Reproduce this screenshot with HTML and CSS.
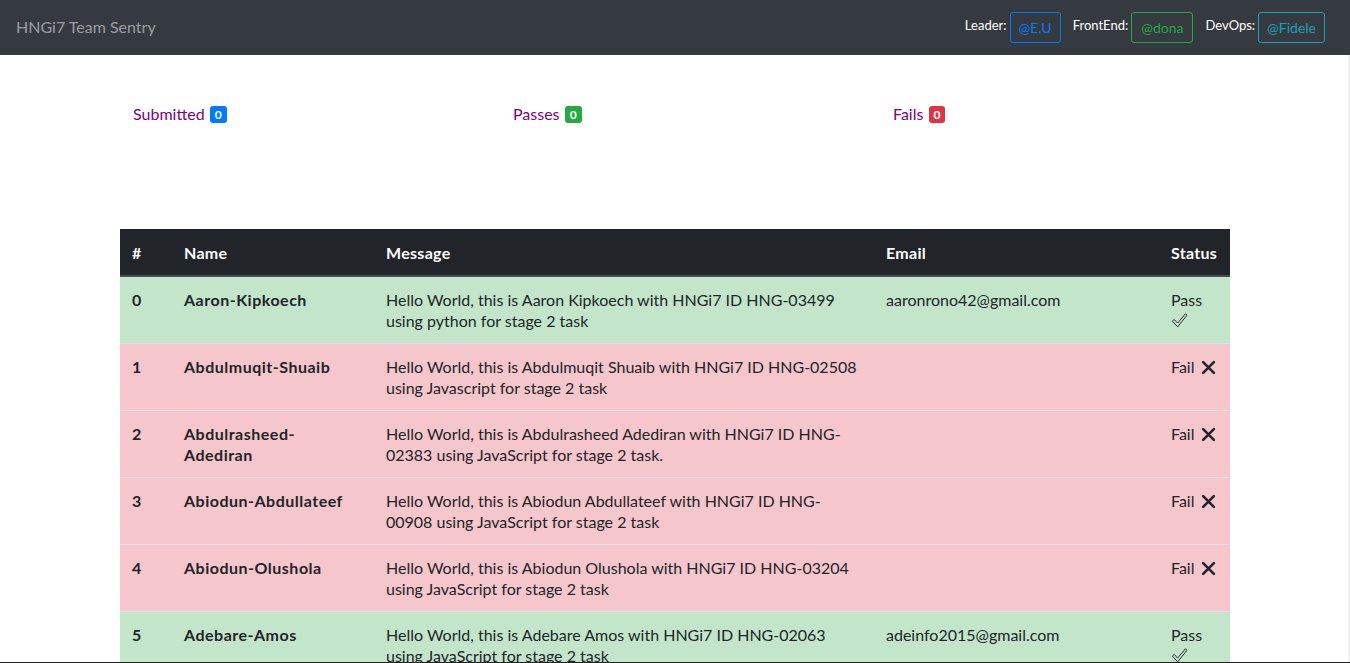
FILE: index.html
```html
<!DOCTYPE html>
<html>
<head>
<meta charset="utf-8">
<link rel="stylesheet" href="styles.css">
</head>
<body>
<nav class="navbar">
  <span class="brand">HNGi7 Team Sentry</span>
  <div class="team">
    <span class="role">Leader:</span><span class="btn btn-blue">@E.U</span>
    <span class="role">FrontEnd:</span><span class="btn btn-green">@dona</span>
    <span class="role">DevOps:</span><span class="btn btn-teal">@Fidele</span>
  </div>
</nav>
<main class="container">
  <div class="stats">
    <div class="stat">Submitted <span class="badge b-blue">0</span></div>
    <div class="stat">Passes <span class="badge b-green">0</span></div>
    <div class="stat">Fails <span class="badge b-red">0</span></div>
  </div>
  <table class="table">
    <thead>
      <tr><th class="c-num">#</th><th class="c-name">Name</th><th class="c-msg">Message</th><th class="c-email">Email</th><th class="c-status">Status</th></tr>
    </thead>
    <tbody>
      <tr class="pass"><td class="bold">0</td><td class="bold">Aaron-Kipkoech</td><td>Hello World, this is Aaron Kipkoech with HNGi7 ID HNG-03499 using python for stage 2 task</td><td>aaronrono42@gmail.com</td><td>Pass <svg class="check" viewBox="0 0 16 16"><path d="M1.2 8.6 L3 7 L6.2 10.4 L13.6 1.6 L15 3 L6.3 14 Z" fill="none" stroke="#212529" stroke-width="0.9" stroke-linejoin="round"/></svg></td></tr>
      <tr class="fail"><td class="bold">1</td><td class="bold">Abdulmuqit-Shuaib</td><td>Hello World, this is Abdulmuqit Shuaib with HNGi7 ID HNG-02508 using Javascript for stage 2 task</td><td></td><td>Fail <svg class="cross" viewBox="0 0 14 14"><path d="M2 2 L12 12 M12 2 L2 12" stroke="#212529" stroke-width="2.4" stroke-linecap="round"/></svg></td></tr>
      <tr class="fail"><td class="bold">2</td><td class="bold">Abdulrasheed-Adediran</td><td>Hello World, this is Abdulrasheed Adediran with HNGi7 ID HNG-02383 using JavaScript for stage 2 task.</td><td></td><td>Fail <svg class="cross" viewBox="0 0 14 14"><path d="M2 2 L12 12 M12 2 L2 12" stroke="#212529" stroke-width="2.4" stroke-linecap="round"/></svg></td></tr>
      <tr class="fail"><td class="bold">3</td><td class="bold">Abiodun-Abdullateef</td><td>Hello World, this is Abiodun Abdullateef with HNGi7 ID HNG-00908 using JavaScript for stage 2 task</td><td></td><td>Fail <svg class="cross" viewBox="0 0 14 14"><path d="M2 2 L12 12 M12 2 L2 12" stroke="#212529" stroke-width="2.4" stroke-linecap="round"/></svg></td></tr>
      <tr class="fail"><td class="bold">4</td><td class="bold">Abiodun-Olushola</td><td>Hello World, this is Abiodun Olushola with HNGi7 ID HNG-03204 using JavaScript for stage 2 task</td><td></td><td>Fail <svg class="cross" viewBox="0 0 14 14"><path d="M2 2 L12 12 M12 2 L2 12" stroke="#212529" stroke-width="2.4" stroke-linecap="round"/></svg></td></tr>
      <tr class="pass"><td class="bold">5</td><td class="bold">Adebare-Amos</td><td>Hello World, this is Adebare Amos with HNGi7 ID HNG-02063 using JavaScript for stage 2 task</td><td>adeinfo2015@gmail.com</td><td>Pass <svg class="check" viewBox="0 0 16 16"><path d="M1.2 8.6 L3 7 L6.2 10.4 L13.6 1.6 L15 3 L6.3 14 Z" fill="none" stroke="#212529" stroke-width="0.9" stroke-linejoin="round"/></svg></td></tr>
    </tbody>
  </table>
</main>
<div class="right-edge"></div>
<div class="bottom-edge"></div>
</body>
</html>
```

FILE: styles.css
```css
* { box-sizing: border-box; }
html, body { margin: 0; padding: 0; }
body {
  font-family: Lato, "Open Sans", sans-serif;
  font-size: 16px;
  color: #212529;
  background: #fff;
  min-height: 100vh;
}
.navbar {
  height: 55px;
  background: #343a40;
  display: flex;
  align-items: center;
  justify-content: space-between;
  padding: 0 25px 0 16px;
}
.brand {
  color: rgba(255,255,255,.5);
  font-size: 16px;
  padding-bottom: 3px;
}
.team { display: flex; align-items: center; }
.role {
  color: #fff;
  font-size: 13px;
  margin: 0 3px 5px 12px;
}
.btn {
  display: inline-block;
  height: 31px;
  line-height: 29px;
  padding: 0 8px;
  border: 1px solid;
  border-radius: 3px;
  font-size: 14px;
}
.btn-blue { color: #007bff; border-color: #007bff; }
.btn-green { color: #28a745; border-color: #28a745; padding: 0 9px; }
.btn-teal { color: #17a2b8; border-color: #17a2b8; }
.container {
  width: 1110px;
  margin: 0 auto;
}
.stats {
  display: grid;
  grid-template-columns: 380px 380px 380px;
  padding: 49px 0 0 13px;
  height: 174px;
}
.stat { color: #800080; font-size: 16px; line-height: 20px; }
.badge {
  display: inline-block;
  color: #fff;
  font-size: 12px;
  font-weight: 700;
  line-height: 17px;
  height: 17px;
  padding: 0 5px;
  border-radius: 3px;
  vertical-align: 1px;
  margin-left: 1px;
}
.b-blue { background: #007bff; }
.b-green { background: #28a745; }
.b-red { background: #dc3545; }
.table {
  width: 1110px;
  border-collapse: collapse;
  table-layout: fixed;
}
.table th {
  background: #212529;
  color: #fff;
  font-weight: 700;
  text-align: left;
  padding: 12px 12px 10px;
  line-height: 24px;
  border-bottom: 2px solid #454d55;
  letter-spacing: 0.3px;
}
.c-num { width: 52px; }
.c-name { width: 202px; }
.c-msg { width: 500px; }
.c-email { width: 285px; }
.c-status { width: 71px; }
.table td {
  padding: 12px;
  line-height: 21px;
  vertical-align: top;
  border-top: 1px solid #dee2e6;
}
.table tbody tr:first-child td { border-top: 0; }
.bold { font-weight: 700; letter-spacing: 0.5px; }
.pass td { background: #c3e6cb; }
.fail td { background: #f5c6cb; }
.check { width: 17px; height: 17px; display: block; margin-top: 2px; }
.cross { width: 15px; height: 15px; vertical-align: -2px; margin-left: 2px; }
.right-edge {
  position: fixed;
  top: 55px; right: 0; bottom: 0;
  width: 2px;
  background: #f0f0f0;
}
.bottom-edge {
  position: fixed;
  left: 0; right: 0; bottom: 0;
  height: 1px;
  background: #222;
}
```
